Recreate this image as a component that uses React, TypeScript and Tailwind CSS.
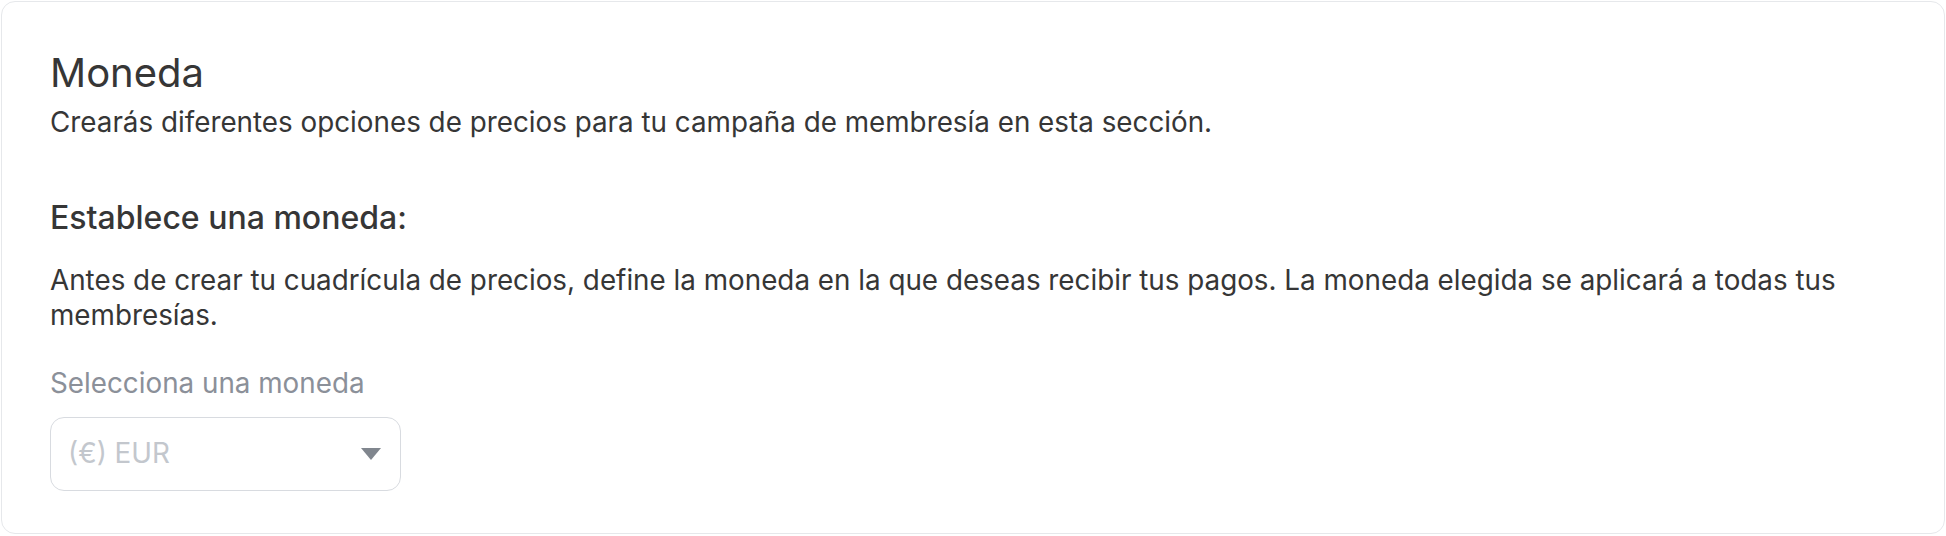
import React from 'react'

const font = { fontFamily: 'Inter, "Noto Sans", sans-serif' }

const CurrencySection: React.FC = () => {
  return (
    <div className="bg-white p-px" style={font}>
      <div className="rounded-[14px] border border-[#e6e8eb] bg-white px-12 pt-12 pb-[42px] text-[#363636]">
        <h2 className="text-[40px] leading-[45px] font-normal">Moneda</h2>
        <p className="mt-[10px] text-[27.8px] leading-[35px]">
          Crearás diferentes opciones de precios para tu campaña de membresía en esta sección.
        </p>

        <h3 className="mt-[58px] text-[32px] leading-[40px] font-medium">Establece una moneda:</h3>
        <p className="mt-[25px] text-[27.8px] leading-[35px]">
          Antes de crear tu cuadrícula de precios, define la moneda en la que deseas recibir tus pagos. La moneda elegida se aplicará a todas tus membresías.
        </p>

        <label className="mt-[33px] block text-[27.8px] leading-[35px] text-[#8b9099]">Selecciona una moneda</label>
        <div className="mt-4 flex h-[74px] w-[351px] items-center justify-between rounded-[14px] border border-[#d8dbe0] pl-[17px] pr-[19px]">
          <span className="text-[27.8px] text-[#c3c7cd]">(€) EUR</span>
          <svg width="20" height="12" viewBox="0 0 20 12">
            <path d="M0 0h20L10 12z" fill="#80868e" />
          </svg>
        </div>
      </div>
    </div>
  )
}

export default function App() {
  return <CurrencySection />
}
